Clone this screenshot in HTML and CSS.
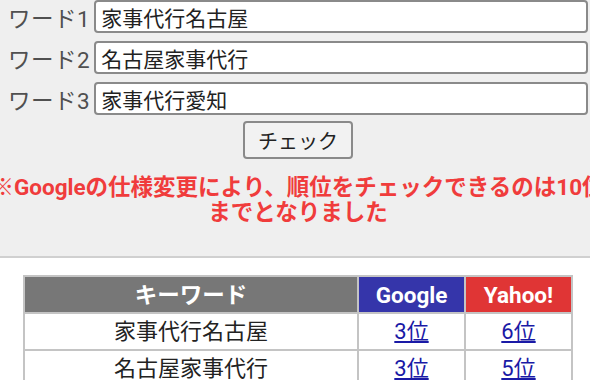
FILE: index.html
```html
<!DOCTYPE html>
<html lang="ja">
<head>
    <meta charset="UTF-8">
    <meta name="viewport" content="width=device-width, initial-scale=1.0">
    <title>順位チェック</title>
    <link rel="stylesheet" href="styles.css">
</head>
<body>
    <!-- Keyword form -->
    <div class="check-box">
        <div class="word-rows">
            <label for="word1">ワード1</label>
            <input type="text" id="word1" value="家事代行名古屋">
            <label for="word2">ワード2</label>
            <input type="text" id="word2" value="名古屋家事代行">
            <label for="word3">ワード3</label>
            <input type="text" id="word3" value="家事代行愛知">
        </div>
        <div class="btn-row">
            <button class="check-btn">チェック</button>
        </div>
        <p class="notice">※Googleの仕様変更により、順位をチェックできるのは10位<br>までとなりました</p>
    </div>

    <!-- Result table -->
    <div class="result">
        <table class="rank-table">
            <tr>
                <th class="th-word">キーワード</th>
                <th class="th-google">Google</th>
                <th class="th-yahoo">Yahoo!</th>
            </tr>
            <tr>
                <td>家事代行名古屋</td>
                <td><a href="#">3位</a></td>
                <td><a href="#">6位</a></td>
            </tr>
            <tr>
                <td>名古屋家事代行</td>
                <td><a href="#">3位</a></td>
                <td><a href="#">5位</a></td>
            </tr>
        </table>
    </div>
</body>
</html>
```

FILE: styles.css
```css
body {
    margin: 0;
    font-family: Roboto, "Noto Sans CJK JP", sans-serif;
    color: #222;
    background-color: #fff;
    overflow: hidden;
}

.check-box {
    background-color: #efefef;
    border-bottom: 2px solid #d0d0d0;
    padding: 0 2px 0 8px;
    height: 258px;
    box-sizing: border-box;
}

.word-rows {
    display: grid;
    grid-template-columns: auto 1fr;
    column-gap: 4px;
    row-gap: 8px;
    align-items: center;
}

.word-rows label {
    font-size: 22.5px;
    letter-spacing: 0.5px;
    color: #505050;
    text-align: right;
}

.word-rows input {
    height: 33px;
    box-sizing: border-box;
    border: 2px solid #8a8a8a;
    border-radius: 4px;
    padding: 0 5px;
    font-family: Roboto, "Noto Sans CJK JP", sans-serif;
    font-size: 21px;
    color: #222;
    background-color: #fff;
}

.btn-row {
    text-align: center;
    margin-top: 6px;
}

.check-btn {
    width: 110px;
    height: 38px;
    font-family: Roboto, "Noto Sans CJK JP", sans-serif;
    font-size: 20px;
    color: #222;
    background-color: #f2f2f2;
    border: 2px solid #8a8a8a;
    border-radius: 4px;
}

.notice {
    margin: 16px -40px 0;
    text-align: center;
    white-space: nowrap;
    color: #f03c3c;
    font-size: 22.5px;
    font-weight: bold;
    line-height: 25px;
}

.result {
    padding: 17px 2px 0 8px;
}

.rank-table {
    width: 550px;
    margin: 0 auto;
    border-collapse: collapse;
    font-size: 22px;
}

.rank-table th,
.rank-table td {
    border: 2px solid #c4c4c4;
    height: 35px;
    padding: 0;
    line-height: 30px;
    text-align: center;
}

.rank-table th {
    color: #fff;
    font-size: 22.5px;
}

.th-word {
    background-color: #777;
}

.th-google {
    width: 105px;
    background-color: #3535aa;
}

.th-yahoo {
    width: 105px;
    background-color: #e03535;
}

.rank-table a {
    color: #1a1aa6;
}
```
